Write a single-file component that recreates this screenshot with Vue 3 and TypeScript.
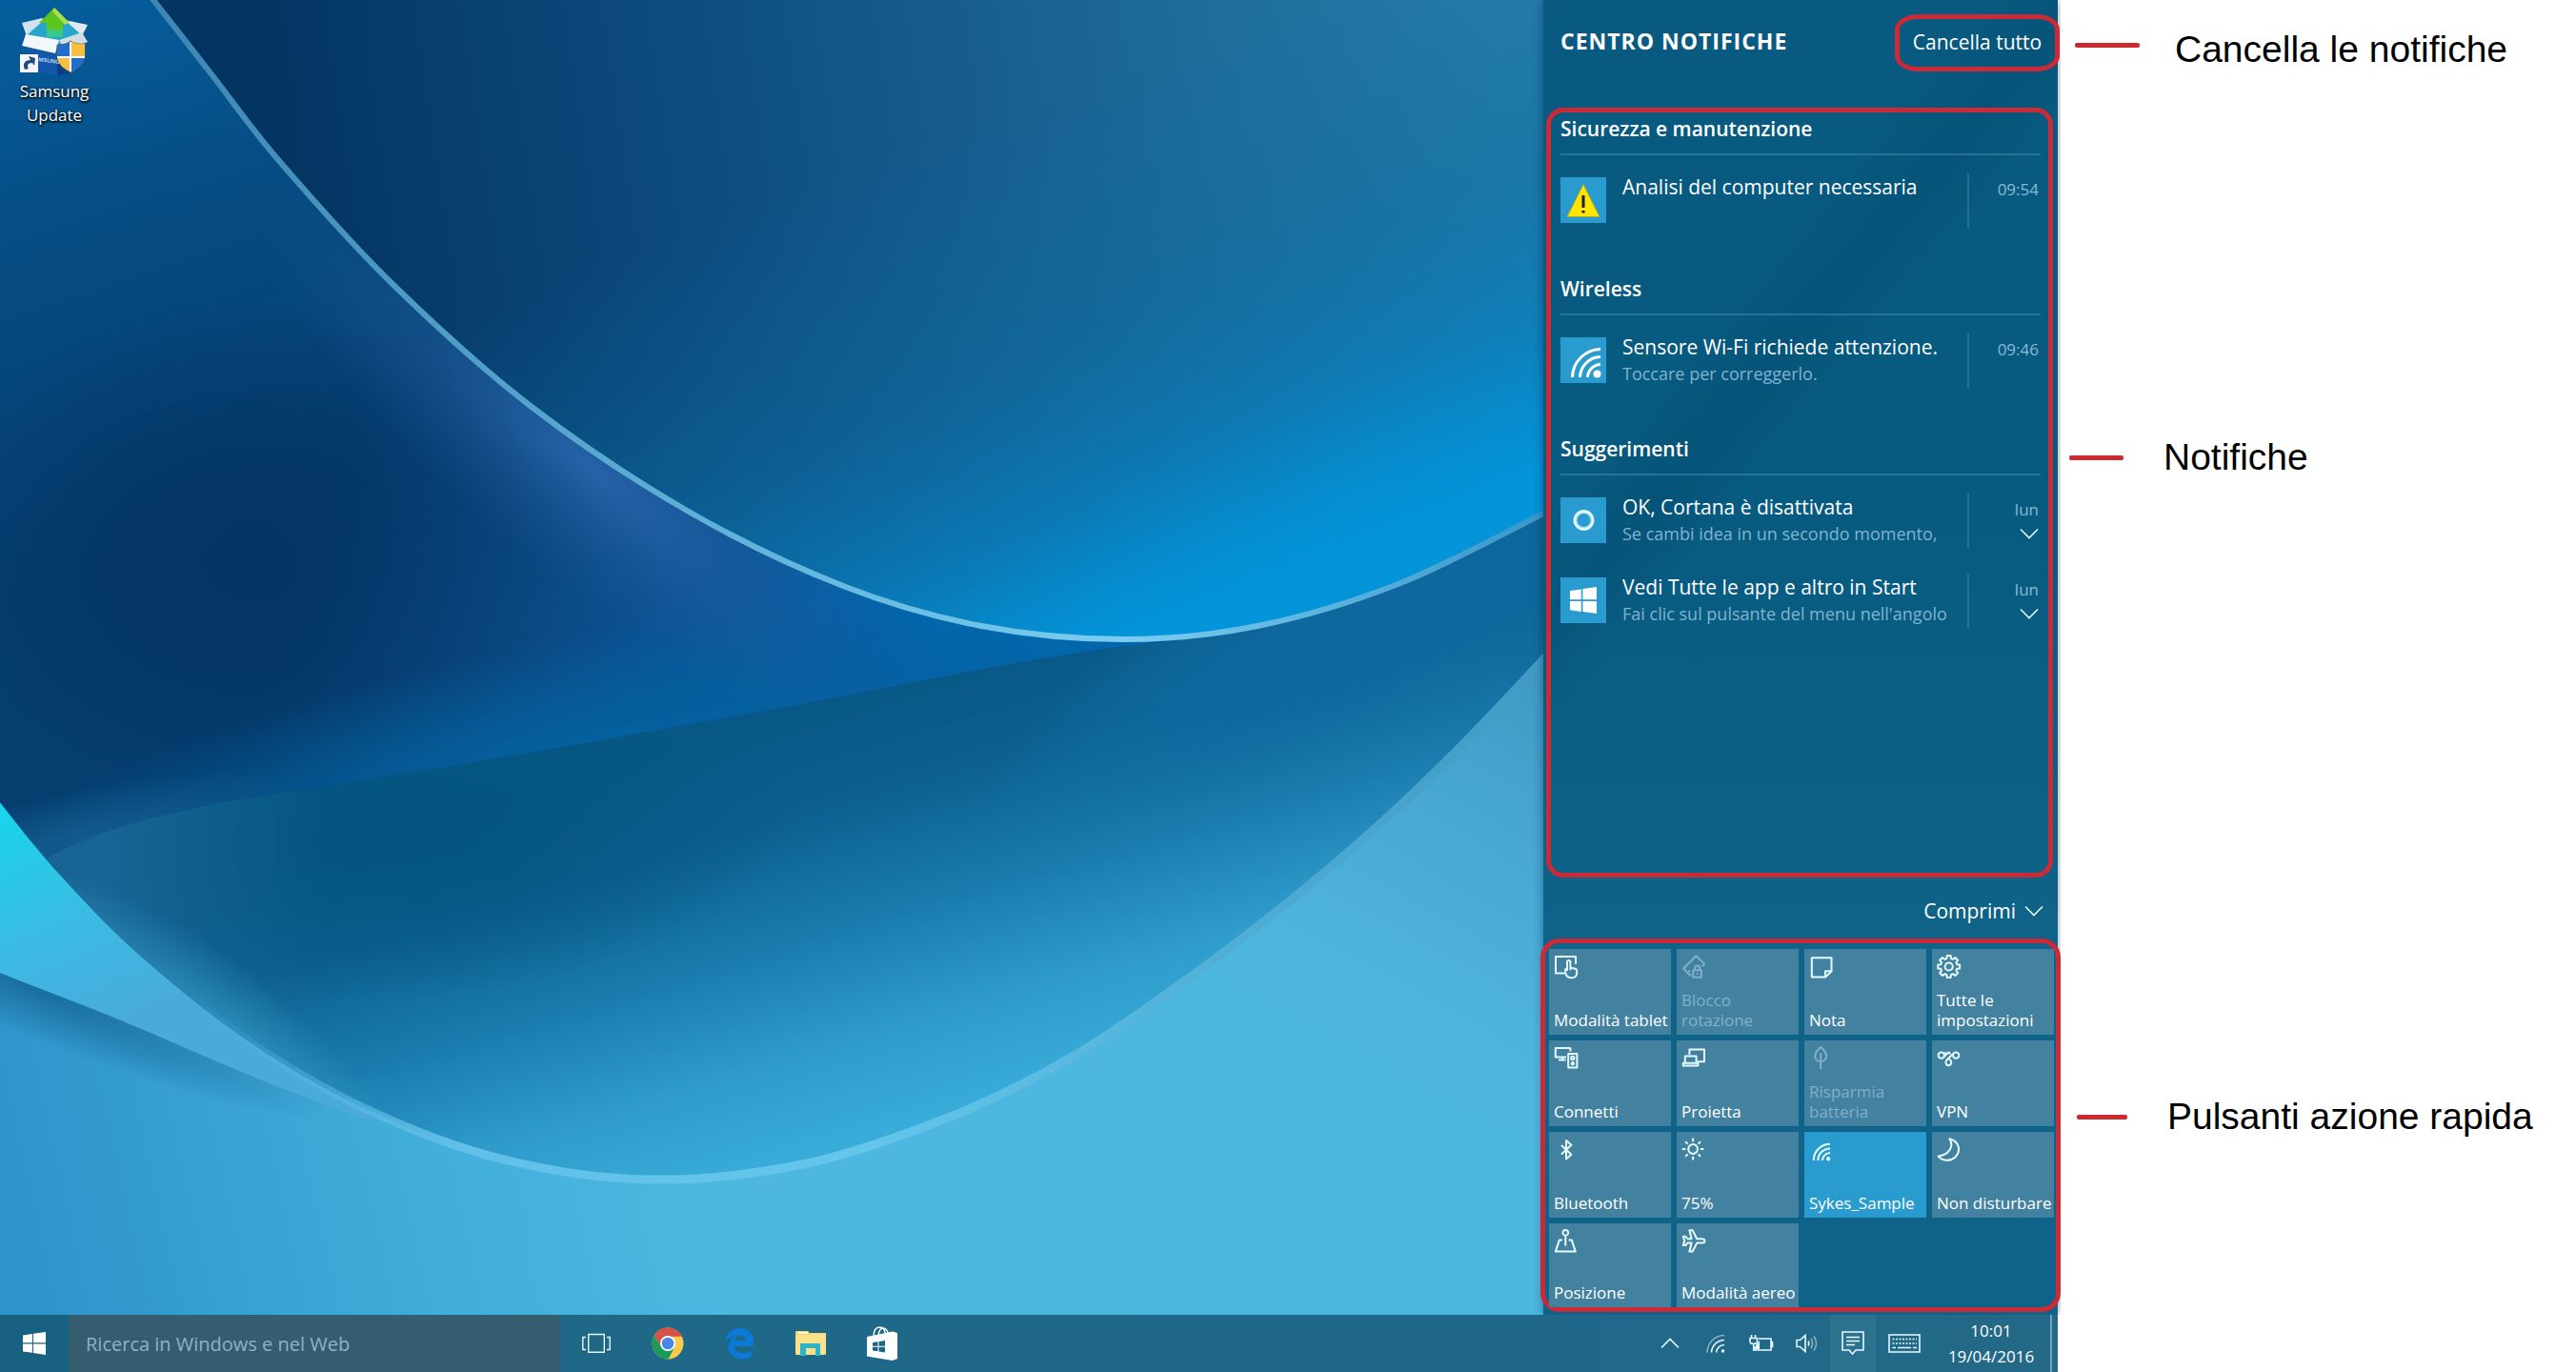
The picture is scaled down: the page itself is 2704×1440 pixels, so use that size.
<script setup lang="ts">
type NoticeIcon = 'warning' | 'wifi' | 'cortana' | 'windows'
type Point = [number, number]

interface Notice {
  icon: NoticeIcon
  title: string
  detail?: string
  time: string
  expandable?: boolean
}

interface NoticeGroup {
  name: string
  notices: Notice[]
}

interface QuickAction {
  label: string
  paths: string[]
  disabled?: boolean
  active?: boolean
}

const groups: NoticeGroup[] = [
  {
    name: 'Sicurezza e manutenzione',
    notices: [{ icon: 'warning', title: 'Analisi del computer necessaria', time: '09:54' }],
  },
  {
    name: 'Wireless',
    notices: [
      {
        icon: 'wifi',
        title: 'Sensore Wi-Fi richiede attenzione.',
        detail: 'Toccare per correggerlo.',
        time: '09:46',
      },
    ],
  },
  {
    name: 'Suggerimenti',
    notices: [
      {
        icon: 'cortana',
        title: 'OK, Cortana è disattivata',
        detail: 'Se cambi idea in un secondo momento,',
        time: 'lun',
        expandable: true,
      },
      {
        icon: 'windows',
        title: 'Vedi Tutte le app e altro in Start',
        detail: "Fai clic sul pulsante del menu nell'angolo",
        time: 'lun',
        expandable: true,
      },
    ],
  },
]

// Smooth curve through the given points (Catmull-Rom turned into Béziers),
// without the leading move command so that it can be joined to other pieces.
function curve(points: Point[]): string {
  let d = `${points[0][0]} ${points[0][1]}`
  for (let i = 0; i < points.length - 1; i++) {
    const before = points[i - 1] ?? points[i]
    const from = points[i]
    const to = points[i + 1]
    const after = points[i + 2] ?? to
    const x1 = from[0] + (to[0] - before[0]) / 6
    const y1 = from[1] + (to[1] - before[1]) / 6
    const x2 = to[0] - (after[0] - from[0]) / 6
    const y2 = to[1] - (after[1] - from[1]) / 6
    d += `C${x1.toFixed(1)} ${y1.toFixed(1)} ${x2.toFixed(1)} ${y2.toFixed(1)} ${to[0]} ${to[1]}`
  }
  return d
}

const upperEdge: Point[] = [
  [150, -14], [222, 78], [294, 170], [413, 299], [558, 427], [723, 537], [885, 615],
  [1030, 657], [1178, 671], [1320, 657], [1470, 612], [1626, 536],
]
const lowerEdge: Point[] = [
  [-14, 820], [0, 842], [62, 917], [145, 1001], [258, 1091], [382, 1163], [525, 1216],
  [682, 1238], [847, 1221], [1000, 1171], [1124, 1110], [1240, 1032], [1346, 952],
  [1446, 867], [1529, 788], [1626, 686],
]

const upperArea = `M${curve(upperEdge)}V-20Z`
const upperLine = `M${curve(upperEdge)}`
const lowerLine = `M${curve(lowerEdge.slice(3))}`
const middleArea = `M${curve(lowerEdge)}V500H1000L0 800Z`

// Outline of a cog with eight teeth, centred in the 26-unit icon box.
function cog(cx: number, cy: number, outer: number, inner: number): string {
  const points: string[] = []
  for (let tooth = 0; tooth < 8; tooth++) {
    const middle = (tooth * Math.PI) / 4
    const corners: Point[] = [
      [-0.27, inner],
      [-0.17, outer],
      [0.17, outer],
      [0.27, inner],
    ]
    for (const [turn, radius] of corners) {
      const x = cx + radius * Math.cos(middle + turn)
      const y = cy + radius * Math.sin(middle + turn)
      points.push(`${x.toFixed(2)} ${y.toFixed(2)}`)
    }
  }
  return `M${points.join('L')}Z`
}

const actions: QuickAction[] = [
  {
    label: 'Modalità tablet',
    paths: [
      'M11 19.5H2V2H23V10',
      'M14 17V7.6a1.7 1.7 0 0 1 3.4 0v6l5 1.2c1.1.3 1.8 1.1 1.8 2.2v2.5a4.8 4.8 0 0 1-4.8 4.8h-1.6a5.8 5.8 0 0 1-5.6-5.8v-3.2h1.8M17.4 13.6v2.6',
    ],
  },
  {
    label: 'Blocco rotazione',
    disabled: true,
    paths: [
      'M10 22.5L2 14.5L15.5 1.3L24 9.6L21.5 12.2',
      'M12.3 16.2h8.6v7.6h-8.6zM14 16v-1.8a2.6 2.6 0 0 1 5.2 0v1.8M7.5 16.5l1.5 1.5M16.6 19.2v1.6',
    ],
  },
  { label: 'Nota', paths: ['M2.8 3.2H23.5V17.5L17 23.6H2.8Z', 'M23.2 17.2H17V23.4'] },
  {
    label: 'Tutte le impostazioni',
    paths: [cog(12.7, 12.5, 11.6, 8.8), 'M8.6 12.5a4.1 4.1 0 1 0 8.2 0a4.1 4.1 0 1 0-8.2 0'],
  },
  {
    label: 'Connetti',
    paths: [
      'M13 11.6H1.8V2H17.4V5.5M9 11.6V14.4M5 14.6H12.5',
      'M15.2 8H24.4V22.6H15.2ZM18.2 12.4a1.6 1.6 0 1 0 3.2 0a1.6 1.6 0 1 0-3.2 0M18.6 18.2a1.2 1.2 0 1 0 2.4 0a1.2 1.2 0 1 0-2.4 0',
    ],
  },
  {
    label: 'Proietta',
    paths: ['M8.4 9V3.4H24V16.2H17', 'M3.8 17.4V10.4H15.6V17.4M1.8 17.8H17.4V20.6H1.8Z'],
  },
  {
    label: 'Risparmia batteria',
    disabled: true,
    paths: [
      'M12.2 1C8.6 4 6.2 7.4 6.2 10.6C6.2 13.8 8.8 16 12.2 16C15.6 16 18.2 13.8 18.2 10.6C18.2 7.4 15.8 4 12.2 1Z',
      'M12.2 7V24',
    ],
  },
  {
    label: 'VPN',
    paths: [
      'M1.6 9.6a3.2 3.2 0 1 0 6.4 0a3.2 3.2 0 1 0-6.4 0M17 9.6a3.2 3.2 0 1 0 6.4 0a3.2 3.2 0 1 0-6.4 0',
      'M7.4 11.4L12.4 6.4L14.4 8.2M17.6 7.6L10.2 14.8C8.6 16.6 9.4 20.2 12.4 20.2C15.2 20.2 16 17 14.6 15.2L13 13.4M8 8L9.6 6.6',
    ],
  },
  { label: 'Bluetooth', paths: ['M8 8L18.4 17.8L13 22.4V3L18.4 7.8L8 17.4'] },
  {
    label: '75%',
    paths: [
      'M7.2 12a4.9 4.9 0 1 0 9.8 0a4.9 4.9 0 1 0-9.8 0',
      'M12.1.6V4.2M12.1 19.8V23.4M.8 12H4.4M19.8 12H23.4M4.2 4.2L6.6 6.6M17.6 17.4L20 19.8M20 4.2L17.6 6.6M6.6 17.4L4.2 19.8',
    ],
  },
  {
    label: 'Sykes_Sample',
    active: true,
    paths: [
      'M4.8 24A17 17 0 0 1 22 6.8M9.4 24A12.5 12.5 0 0 1 22 11.4M14 24A8 8 0 0 1 22 16',
      'M19 22.2a1.2 1.2 0 1 0 2.4 0a1.2 1.2 0 1 0-2.4 0',
    ],
  },
  {
    label: 'Non disturbare',
    paths: ['M13.4 1.2C17.8 8 14.4 18 1.6 19.4C5.4 24.6 14 25.4 19.4 20.4C25.6 14.4 24 4 13.4 1.2Z'],
  },
  {
    label: 'Posizione',
    paths: [
      'M9.4 3.8a2.9 2.9 0 1 0 5.8 0a2.9 2.9 0 1 0-5.8 0M12.3 6.8V17.6',
      'M9 11.6H5.8L1.8 23.6H22.8L18.8 11.6H15.6',
    ],
  },
  {
    label: 'Modalità aereo',
    paths: [
      'M24.4 12.4C24.4 11 23 10.2 21.4 10.2H16.2L11.6 1.2H8.4L10.6 10.2H6.4L4.4 7.8H1.8L3.2 12.4L1.8 17H4.4L6.4 14.6H10.6L8.4 23.6H11.6L16.2 14.6H21.4C23 14.6 24.4 13.8 24.4 12.4Z',
    ],
  },
]

const callouts = [
  { key: 'for-clear', text: 'Cancella le notifiche' },
  { key: 'for-list', text: 'Notifiche' },
  { key: 'for-tiles', text: 'Pulsanti azione rapida' },
]
</script>

<template>
  <div class="sheet">
    <div class="screen">
      <div class="workspace">
        <svg class="wallpaper" viewBox="0 0 1620 1380" preserveAspectRatio="none" aria-hidden="true">
          <defs>
            <linearGradient id="upper" gradientUnits="userSpaceOnUse" x1="300" y1="120" x2="1560" y2="-60">
              <stop offset="0" stop-color="#033563" />
              <stop offset=".35" stop-color="#0e4d80" />
              <stop offset=".7" stop-color="#1c6896" />
              <stop offset="1" stop-color="#277da8" />
            </linearGradient>
            <linearGradient id="upperRise" gradientUnits="userSpaceOnUse" x1="930" y1="90" x2="1160" y2="680">
              <stop offset=".1" stop-color="#0a6ba6" stop-opacity="0" />
              <stop offset=".5" stop-color="#0b6fa6" stop-opacity=".45" />
              <stop offset=".75" stop-color="#087fbd" stop-opacity=".75" />
              <stop offset="1" stop-color="#0494da" />
            </linearGradient>
            <radialGradient id="upperGlow" gradientUnits="userSpaceOnUse" cx="0" cy="0" r="1" gradientTransform="translate(1400 650) rotate(-24) scale(600 230)">
              <stop offset="0" stop-color="#0294d9" stop-opacity=".75" />
              <stop offset=".5" stop-color="#0294d9" stop-opacity=".35" />
              <stop offset="1" stop-color="#0294d9" stop-opacity="0" />
            </radialGradient>
            <linearGradient id="left" gradientUnits="userSpaceOnUse" x1="0" y1="0" x2="180" y2="560">
              <stop offset="0" stop-color="#055f9e" />
              <stop offset=".4" stop-color="#064d85" />
              <stop offset="1" stop-color="#053f70" />
            </linearGradient>
            <radialGradient id="leftDark" gradientUnits="userSpaceOnUse" cx="0" cy="0" r="1" gradientTransform="translate(265 590) scale(360 280)">
              <stop offset="0" stop-color="#033364" />
              <stop offset=".4" stop-color="#033465" stop-opacity=".75" />
              <stop offset="1" stop-color="#033465" stop-opacity="0" />
            </radialGradient>
            <linearGradient id="leftGlow" gradientUnits="userSpaceOnUse" x1="330" y1="560" x2="960" y2="750">
              <stop offset="0" stop-color="#0b427c" stop-opacity="0" />
              <stop offset=".45" stop-color="#0d5090" stop-opacity=".8" />
              <stop offset=".8" stop-color="#0660a6" />
              <stop offset="1" stop-color="#0368b0" />
            </linearGradient>
            <radialGradient id="leftRidge" gradientUnits="userSpaceOnUse" cx="0" cy="0" r="1" gradientTransform="translate(620 490) rotate(39) scale(430 120)">
              <stop offset="0" stop-color="#2a66ac" stop-opacity=".9" />
              <stop offset=".5" stop-color="#235d9f" stop-opacity=".4" />
              <stop offset="1" stop-color="#1d5796" stop-opacity="0" />
            </radialGradient>
            <radialGradient id="leftFoot" gradientUnits="userSpaceOnUse" cx="0" cy="0" r="1" gradientTransform="translate(620 785) rotate(-11) scale(640 120)">
              <stop offset="0" stop-color="#04619f" />
              <stop offset=".4" stop-color="#04609d" stop-opacity=".7" />
              <stop offset="1" stop-color="#045d99" stop-opacity="0" />
            </radialGradient>
            <radialGradient id="leftCorner" gradientUnits="userSpaceOnUse" cx="0" cy="0" r="1" gradientTransform="translate(90 880) rotate(-12) scale(240 52)">
              <stop offset="0" stop-color="#145c8e" />
              <stop offset="1" stop-color="#145c8e" stop-opacity="0" />
            </radialGradient>
            <linearGradient id="middle" gradientUnits="userSpaceOnUse" x1="700" y1="790" x2="830" y2="1230">
              <stop offset="0" stop-color="#085885" />
              <stop offset=".22" stop-color="#0b6090" />
              <stop offset=".5" stop-color="#1a7cae" />
              <stop offset=".75" stop-color="#2e9bcb" />
              <stop offset="1" stop-color="#3aaedb" />
            </linearGradient>
            <radialGradient id="middleDark" gradientUnits="userSpaceOnUse" cx="0" cy="0" r="1" gradientTransform="translate(420 880) rotate(-4) scale(420 170)">
              <stop offset="0" stop-color="#04547f" />
              <stop offset="1" stop-color="#04547f" stop-opacity="0" />
            </radialGradient>
            <radialGradient id="middleRight" gradientUnits="userSpaceOnUse" cx="0" cy="0" r="1" gradientTransform="translate(1460 640) rotate(-26) scale(460 120)">
              <stop offset="0" stop-color="#0e689f" />
              <stop offset=".5" stop-color="#0f6aa2" stop-opacity=".7" />
              <stop offset="1" stop-color="#1272a9" stop-opacity="0" />
            </radialGradient>
            <radialGradient id="middleEdge" gradientUnits="userSpaceOnUse" cx="0" cy="0" r="1" gradientTransform="translate(200 1110) rotate(38) scale(300 110)">
              <stop offset="0" stop-color="#3da5d0" />
              <stop offset="1" stop-color="#3da5d0" stop-opacity="0" />
            </radialGradient>
            <linearGradient id="edgeFade" gradientUnits="userSpaceOnUse" x1="0" y1="0" x2="340" y2="0">
              <stop offset="0" stop-color="#175f90" />
              <stop offset=".3" stop-color="#1d6b9b" stop-opacity=".7" />
              <stop offset="1" stop-color="#1d6b9b" stop-opacity="0" />
            </linearGradient>
            <linearGradient id="lower" gradientUnits="userSpaceOnUse" x1="0" y1="1150" x2="700" y2="1000">
              <stop offset="0" stop-color="#2f94ca" />
              <stop offset=".6" stop-color="#42aedb" />
              <stop offset="1" stop-color="#4db7e0" />
            </linearGradient>
            <linearGradient id="lowerRight" gradientUnits="userSpaceOnUse" x1="1640" y1="720" x2="1400" y2="1160">
              <stop offset="0" stop-color="#3f99c2" />
              <stop offset=".6" stop-color="#4cadd8" stop-opacity=".7" />
              <stop offset="1" stop-color="#52b8e1" stop-opacity="0" />
            </linearGradient>
            <linearGradient id="wedge" gradientUnits="userSpaceOnUse" x1="0" y1="860" x2="90" y2="1090">
              <stop offset="0" stop-color="#1bd3ea" />
              <stop offset=".5" stop-color="#3abce4" />
              <stop offset="1" stop-color="#4aaadc" />
            </linearGradient>
            <radialGradient id="wedgeShade" gradientUnits="userSpaceOnUse" cx="0" cy="0" r="1" gradientTransform="translate(40 1040) rotate(22) scale(330 50)">
              <stop offset="0" stop-color="#17699b" stop-opacity=".9" />
              <stop offset="1" stop-color="#17699b" stop-opacity="0" />
            </radialGradient>
            <linearGradient id="ridge" gradientUnits="userSpaceOnUse" x1="160" y1="0" x2="1620" y2="0">
              <stop offset="0" stop-color="#3d86b2" />
              <stop offset=".45" stop-color="#62b6dc" />
              <stop offset=".7" stop-color="#7accf0" />
              <stop offset="1" stop-color="#3a97c9" />
            </linearGradient>
            <linearGradient id="ridgeLow" gradientUnits="userSpaceOnUse" x1="200" y1="0" x2="1620" y2="0">
              <stop offset="0" stop-color="#58b4e0" stop-opacity="0" />
              <stop offset=".2" stop-color="#62c0e8" />
              <stop offset=".5" stop-color="#64c6ea" />
              <stop offset="1" stop-color="#3f9ac4" />
            </linearGradient>
            <clipPath id="clipUpper"><path :d="upperArea" /></clipPath>
            <clipPath id="clipMiddle"><path :d="middleArea" /></clipPath>
            <clipPath id="clipLeft">
              <path d="M0 0H1240V671C1130 682 1010 706 909 726C810 746 710 762 620 779C500 800 380 820 258 838C190 850 110 866 50 900L30 879L0 842Z" />
            </clipPath>
          </defs>

          <rect width="1620" height="1380" fill="url(#lower)" />
          <rect width="1620" height="1380" fill="url(#lowerRight)" />
          <rect width="1620" height="1380" fill="url(#wedgeShade)" />
          <path d="M0 830V1021C55 1043 110 1063 165 1087C240 1120 310 1150 400 1180L258 1080Z" fill="url(#wedge)" />

          <g clip-path="url(#clipMiddle)">
            <rect width="1620" height="1380" fill="url(#middle)" />
            <rect width="1620" height="1380" fill="url(#middleDark)" />
            <rect width="1620" height="1380" fill="url(#middleRight)" />
            <rect width="400" height="1380" fill="url(#edgeFade)" />
            <rect width="1620" height="1380" fill="url(#middleEdge)" />
          </g>
          <path :d="lowerLine" fill="none" stroke="url(#ridgeLow)" stroke-width="9" />

          <g clip-path="url(#clipLeft)">
            <rect width="1620" height="920" fill="url(#left)" />
            <rect width="1620" height="920" fill="url(#leftDark)" />
            <rect width="1620" height="920" fill="url(#leftGlow)" />
            <rect width="1620" height="920" fill="url(#leftFoot)" />
            <rect width="1620" height="920" fill="url(#leftRidge)" />
            <rect width="1620" height="920" fill="url(#leftCorner)" />
          </g>
          <g clip-path="url(#clipUpper)">
            <rect width="1620" height="700" fill="url(#upper)" />
            <rect width="1620" height="700" fill="url(#upperRise)" />
            <rect width="1620" height="700" fill="url(#upperGlow)" />
          </g>
          <path :d="upperLine" fill="none" stroke="url(#ridge)" stroke-width="6" />
        </svg>

        <main class="desktop">
          <button class="shortcut" type="button">
            <svg width="74" height="76" viewBox="0 0 74 76" aria-hidden="true">
              <path d="M8 44L40 50V74L10 67Z" fill="#1457a8" />
              <path d="M40 50L62 42V68L40 74Z" fill="#0d3f86" />
              <path d="M3 18L24 13L38 20L24 27L8 32Z" fill="#cfe3ec" />
              <path d="M72 20L48 15L38 20L50 28L66 32Z" fill="#dfeaf0" />
              <path d="M8 31L24 17H50L66 31L40 42Z" fill="#26a6cf" />
              <path d="M7 30L42 36L38 50L3 42Z" fill="#f3f7fa" />
              <path d="M42 36L66 28L72 38L48 48Z" fill="#d4dde4" />
              <path d="M37 2L53 18H46V33H29V18H21Z" fill="#5cc41c" />
              <path d="M37 2L53 18L48 20L35 6Z" fill="#a8e04a" />
              <path d="M29 25H46V33H29Z" fill="#38c98a" />
              <text x="12" y="57" class="boxname" transform="rotate(8 12 57)">SAMSUNG</text>
              <path d="M40 41Q50 41 54 37Q60 41 69 40V52C69 60 63 66 55 70C46 66 40 60 40 52Z" fill="#1e6fd0" stroke="#55606c" stroke-width="1" />
              <path d="M55 37Q60 41 69 40V54H55ZM40 54H55V70C46 66 41 61 40 54Z" fill="#f9bf3f" />
              <path d="M54 38V69M40 54H69" stroke="#fff" stroke-width="2" />
              <rect x="1" y="51" width="19" height="19" fill="#f4f7fb" />
              <path d="M6 67C3 60 7 57 12 57L10 53L17 55L16 63L14 60C9 60 8 63 10 66Z" fill="#23497c" />
            </svg>
            <span>Samsung Update</span>
          </button>
        </main>

        <aside class="center">
          <header class="center-head">
            <h1>CENTRO NOTIFICHE</h1>
            <button class="clear marked" type="button">Cancella tutto</button>
          </header>

          <div class="notices marked">
            <section v-for="group in groups" :key="group.name" class="group">
              <h2>{{ group.name }}</h2>
              <ul>
                <li v-for="notice in group.notices" :key="notice.title" class="notice">
                  <span class="badge">
                    <svg v-if="notice.icon === 'warning'" width="48" height="48" viewBox="0 0 48 48">
                      <path d="M24 7.5L41 41.5H7Z" fill="#ffe500" stroke="#a9a83a" stroke-width="1" />
                      <path d="M24 19V32M24 35V37.5" stroke="#1d1d2b" stroke-width="3" />
                    </svg>
                    <svg v-else-if="notice.icon === 'wifi'" width="48" height="48" viewBox="0 0 48 48" fill="none" stroke="#fff" stroke-width="3">
                      <path d="M12.5 42A30 30 0 0 1 42 12.5M20.5 42A22 22 0 0 1 42 20.5M28.5 42A14 14 0 0 1 42 28.5" />
                      <circle cx="38.5" cy="38.5" r="4" fill="#fff" stroke="none" />
                    </svg>
                    <svg v-else-if="notice.icon === 'cortana'" width="48" height="48" viewBox="0 0 48 48">
                      <circle cx="24.5" cy="24" r="9" fill="none" stroke="#a9e2ee" stroke-width="4" />
                      <circle cx="24.5" cy="24" r="9.6" fill="none" stroke="#eefcff" stroke-width="2" />
                    </svg>
                    <svg v-else width="48" height="48" viewBox="0 0 48 48">
                      <path d="M10 14L21.8 12.4V23.3H10ZM23.4 12.1L38 10V23.3H23.4ZM10 24.9H21.8V35.9L10 34.2ZM23.4 24.9H38V38L23.4 36.1Z" fill="#fff" />
                    </svg>
                  </span>
                  <span class="words">
                    <strong>{{ notice.title }}</strong>
                    <span v-if="notice.detail" class="detail">{{ notice.detail }}</span>
                  </span>
                  <span class="when">
                    <time>{{ notice.time }}</time>
                    <button v-if="notice.expandable" class="expand" type="button" aria-label="Espandi">
                      <svg width="20" height="12" viewBox="0 0 20 12"><path d="M1 1.5L10 10.5L19 1.5" /></svg>
                    </button>
                  </span>
                </li>
              </ul>
            </section>
          </div>

          <button class="collapse" type="button">
            Comprimi
            <svg width="20" height="12" viewBox="0 0 20 12"><path d="M1 1.5L10 10.5L19 1.5" /></svg>
          </button>

          <div class="tiles marked">
            <button
              v-for="action in actions"
              :key="action.label"
              class="tile"
              :class="{ active: action.active }"
              :disabled="action.disabled"
              type="button"
            >
              <svg width="26" height="26" viewBox="0 0 26 26" aria-hidden="true">
                <path v-for="path in action.paths" :key="path" :d="path" />
              </svg>
              <span>{{ action.label }}</span>
            </button>
          </div>
        </aside>
      </div>

      <footer class="taskbar">
        <button class="start" type="button" aria-label="Start">
          <svg width="24" height="24" viewBox="0 0 24 24">
            <path d="M0 3.4L10 2V11.3H0ZM11 1.8L24 0V11.3H11ZM0 12.4H10V21.8L0 20.5ZM11 12.4H24V24L11 22Z" fill="#fff" />
          </svg>
        </button>
        <input class="search" type="search" placeholder="Ricerca in Windows e nel Web" aria-label="Ricerca in Windows e nel Web" />
        <nav class="apps">
          <button type="button" aria-label="Visualizzazione attività">
            <svg width="30" height="22" viewBox="0 0 30 22" fill="none" stroke="#e6f7fb" stroke-width="1.4">
              <path d="M6.7 1.5H23.3V20.3H6.7ZM4 4.5H.8V17.5H4M26 4.5H29.2V17.5H26" />
            </svg>
          </button>
          <button type="button" aria-label="Chrome">
            <svg width="34" height="34" viewBox="0 0 34 34">
              <circle cx="17" cy="17" r="16.5" fill="#fbcb4b" />
              <path d="M2.7 8.8A16.5 16.5 0 0 1 32 9.8H17L10 21Z" fill="#d3524a" />
              <path d="M2.7 8.8L10.5 21.5L17 24.5L24 21L17.5 33.5A16.5 16.5 0 0 1 2.7 8.8Z" fill="#1b9a59" />
              <circle cx="17" cy="17" r="8" fill="#fff" />
              <circle cx="17" cy="17" r="6.3" fill="#4a86e8" />
            </svg>
          </button>
          <button type="button" aria-label="Edge">
            <svg width="32" height="34" viewBox="0 0 32 34">
              <path d="M1 14.5C2.5 6 9 1 17 1C26 1 31 7.5 31 15.5V20H11C11.5 25 15.5 27 20 27C23.5 27 26.5 26 29 24.5V31C26 32.5 22.5 33 19 33C10 33 4.5 28 4.5 20.5C4.5 15.5 7.5 11.5 12 9.5C7 10 3.5 12 1 14.5ZM11.5 14H22.5C22.5 10.5 20.5 8.5 17.5 8.5C14 8.5 12 10.5 11.5 14Z" fill="#0a7ad6" />
            </svg>
          </button>
          <button type="button" aria-label="Esplora file">
            <svg width="32" height="28" viewBox="0 0 32 28">
              <path d="M0 2Q0 1 1 1H13L15 3H31Q32 3 32 4V25Q32 26 31 26H1Q0 26 0 25Z" fill="#f3d468" />
              <path d="M3 2H13V4H3Z" fill="#fff7d8" />
              <path d="M0 5H15L17 3.5H32V24L30 26H2L0 24Z" fill="#fbe28a" />
              <path d="M5 14H26V27H21V19H11V27H5Z" fill="#2fb2cc" />
            </svg>
          </button>
          <button type="button" aria-label="Store">
            <svg width="32" height="36" viewBox="0 0 32 36">
              <path d="M7 11C7 4 10 1 13.5 1C17 1 19 4 19.5 9M12 10C12.5 5 14.5 2 17 2C20 2 22 5 22 8" fill="none" stroke="#fff" stroke-width="1.5" />
              <path d="M0 11L27 5.5L32 7V34L27 36L0 31.5Z" fill="#fff" />
              <path d="M6 17L11.5 16.2V20.7H6ZM12.5 16L19 15V20.7H12.5ZM6 21.7H11.5V26.3L6 25.5ZM12.5 21.7H19V27.4L12.5 26.4Z" fill="#1f6686" />
            </svg>
          </button>
        </nav>
        <div class="tray">
          <button type="button" aria-label="Mostra icone nascoste">
            <svg width="20" height="12" viewBox="0 0 20 12"><path d="M1 10.5L10 1.5L19 10.5" /></svg>
          </button>
          <button type="button" aria-label="Wi-Fi">
            <svg width="20" height="20" viewBox="0 0 20 20">
              <path d="M1 19.5A18 18 0 0 1 19 1.5" opacity=".5" />
              <path d="M5.5 19.5A13.5 13.5 0 0 1 19 6.5M10.5 19.5A8.5 8.5 0 0 1 19 11.5" />
              <rect x="16" y="16.5" width="3" height="3" class="solid" />
            </svg>
          </button>
          <button type="button" aria-label="Batteria">
            <svg width="26" height="20" viewBox="0 0 26 20">
              <path d="M10 5H23V17H6V13M23 8.5H24.5V13.5H23M2.5 1V4.5M6.5 1V4.5M1 4.5H8.5V8Q8.5 10.5 4.7 10.5Q1 10.5 1 8ZM4.7 10.5V17H6" />
              <path d="M7 12L11 7V16H7Z" class="solid" />
            </svg>
          </button>
          <button type="button" aria-label="Volume">
            <svg width="24" height="20" viewBox="0 0 24 20">
              <path d="M1 6.5H4.5L10 1.5V18.5L4.5 13.5H1ZM13 7.5Q14.5 10 13 12.5" />
              <path d="M16 5Q19 10 16 15M19 2.5Q24 10 19 17.5" opacity=".5" />
            </svg>
          </button>
          <button class="open" type="button" aria-label="Centro notifiche">
            <svg width="24" height="26" viewBox="0 0 24 26">
              <path d="M1 1H23V20H15L11.5 24L8 20H1ZM5 6.5H19M5 10.5H19M5 14.5H14" />
            </svg>
          </button>
          <button class="keys" type="button" aria-label="Tastiera virtuale">
            <svg width="34" height="20" viewBox="0 0 34 20">
              <path d="M1 1H33V19H1Z" />
              <path d="M4.5 5.5H30M4.5 10H30" stroke-dasharray="2 1.5" />
              <path d="M4.5 14.5H8M10 14.5H24M26 14.5H30" />
            </svg>
          </button>
          <button class="clock" type="button">
            <time>10:01</time>
            <time>19/04/2016</time>
          </button>
          <button class="peek" type="button" aria-label="Mostra desktop"></button>
        </div>
      </footer>
    </div>

    <aside class="notes">
      <p v-for="callout in callouts" :key="callout.key" class="callout" :class="callout.key">
        <span class="leader"></span>
        <span>{{ callout.text }}</span>
      </p>
    </aside>
  </div>
</template>

<style>
body {
  margin: 0;
  background: #fff;
}
</style>

<style scoped>
.sheet {
  display: flex;
  min-height: 100vh;
  font-family: 'Open Sans', 'Noto Sans', sans-serif;
  color: #fff;
}

.sheet *,
.sheet *::before {
  box-sizing: border-box;
}

button {
  padding: 0;
  border: 0;
  background: none;
  color: inherit;
  font: inherit;
}

h1,
h2,
p,
ul {
  margin: 0;
  padding: 0;
  list-style: none;
}

svg {
  display: block;
}

.screen {
  flex: 1;
  min-width: 0;
  display: flex;
  flex-direction: column;
}

.workspace {
  flex: 1;
  position: relative;
  display: flex;
}

.wallpaper {
  position: absolute;
  inset: 0 540px 0 0;
  width: calc(100% - 540px);
  height: 100%;
}

.desktop {
  flex: 1;
  position: relative;
  padding: 6px 12px;
}

.shortcut {
  display: flex;
  flex-direction: column;
  align-items: center;
  gap: 1px;
  width: 90px;
  font-size: 17px;
  line-height: 25px;
  text-shadow: 1px 1px 3px #000, 0 1px 2px #000;
}

.boxname {
  font: 700 6px 'Liberation Sans', sans-serif;
  fill: #b6d4f2;
  text-shadow: none;
}

/* Red outlines that single out the parts named beside the screen */
.marked {
  border: 5px solid #cc2a36;
}

.center {
  position: relative;
  width: 540px;
  display: flex;
  flex-direction: column;
  padding-bottom: 3px;
  background:
    linear-gradient(130deg, transparent 27%, rgba(0, 50, 90, 0.16) 33%, transparent 38%),
    linear-gradient(#085a80, #075a80 40%, #0f6388 70%, #106388);
  box-shadow: 0 0 10px rgba(0, 30, 60, 0.45);
  clip-path: inset(0 -3px 0 -10px);
}

.center-head {
  display: flex;
  align-items: center;
  justify-content: space-between;
  padding: 15px 0 38px 18px;
  margin-right: -2px;
}

h1 {
  padding-bottom: 5px;
  font-size: 23px;
  line-height: 30px;
  font-weight: 700;
  letter-spacing: 1px;
}

.clear {
  width: 173px;
  height: 60px;
  padding-bottom: 3px;
  border-radius: 24px / 16px;
  font-size: 21px;
}

.notices {
  flex: 1;
  margin: 0 5px 0 3px;
  padding: 2px 8px 40px 10px;
  border-radius: 18px;
}

.group + .group {
  margin-top: 49px;
}

h2 {
  padding-bottom: 11px;
  border-bottom: 2px solid rgba(120, 190, 220, 0.28);
  font-size: 21px;
  line-height: 30px;
  font-weight: 600;
}

ul {
  display: flex;
  flex-direction: column;
  gap: 27px;
  padding-top: 19px;
}

.notice {
  display: flex;
  height: 57px;
}

.badge {
  width: 48px;
  height: 48px;
  margin-top: 4px;
  background: #2a9bcf;
}

.words {
  flex: 1;
  min-width: 0;
  margin: 0 18px 0 17px;
  overflow: hidden;
  white-space: nowrap;
  line-height: 28px;
}

.words strong {
  display: block;
  font-size: 21px;
  font-weight: 400;
}

.detail {
  font-size: 18px;
  color: #80b4cf;
}

.when {
  width: 77px;
  display: flex;
  flex-direction: column;
  align-items: flex-end;
  gap: 5px;
  padding: 3px 2px 0 0;
  border-left: 2px solid rgba(120, 190, 220, 0.25);
  font-size: 17px;
  line-height: 28px;
  color: #8abbd4;
}

.expand svg,
.collapse svg,
.tray svg,
.tile svg {
  fill: none;
  stroke: #e6fbff;
  stroke-width: 1.6;
}

.collapse {
  align-self: flex-end;
  display: flex;
  align-items: center;
  gap: 9px;
  height: 64px;
  padding: 5px 15px 0 0;
  font-size: 21px;
}

.tiles {
  display: grid;
  grid-template-columns: repeat(4, 1fr);
  grid-template-rows: repeat(3, 90px) 88px;
  gap: 6px;
  margin: 0 -3px;
  padding: 6px 2px 0 4px;
  border-radius: 20px;
}

.tile {
  display: flex;
  flex-direction: column;
  justify-content: space-between;
  align-items: flex-start;
  padding: 6px 0 5px 5px;
  background: #4282a0;
  font-size: 17px;
  line-height: 21px;
  text-align: left;
}

.tile svg {
  stroke-width: 2;
  stroke-linejoin: round;
}

.tile span {
  max-width: 123px;
}

.tile.active {
  background: #2a9bcf;
}

.tile:disabled {
  color: #7fb0c8;
}

.tile:disabled svg {
  stroke: #7fb0c8;
}

.taskbar {
  display: flex;
  height: 60px;
  background: linear-gradient(90deg, #17607f, #1f6887 30%, #20688a 75%, #246987);
}

.taskbar button {
  display: flex;
  align-items: center;
  justify-content: center;
}

.start {
  width: 72px;
}

.search {
  width: 516px;
  padding: 0 18px;
  border: 0;
  border-radius: 0;
  background: #345d70;
  color: #fff;
  font: 20px 'Open Sans', 'Noto Sans', sans-serif;
  appearance: none;
}

.search::placeholder {
  color: #8fb2c3;
  opacity: 1;
}

.apps,
.tray {
  display: flex;
}

.apps button {
  width: 75px;
}

.tray {
  margin-left: auto;
}

.tray button {
  width: 48px;
}

.tray .solid {
  fill: #e6fbff;
  stroke: none;
}

.tray .open {
  background: #2c718d;
}

.tray .keys {
  width: 59px;
}

.tray .clock {
  width: 124px;
  flex-direction: column;
  font-size: 17px;
  line-height: 27px;
}

.tray .peek {
  width: 8px;
  border-left: 2px solid #6ba5bd;
}

.notes {
  width: 544px;
  padding-top: 30px;
  font: 39px/44px 'Liberation Sans', Arial, sans-serif;
  color: #000;
}

.callout {
  display: flex;
  align-items: center;
}

.leader {
  height: 5px;
  border-radius: 2px;
  background: #cc2a30;
}

.for-clear {
  gap: 37px;
  padding-left: 18px;
}

.for-clear .leader {
  width: 68px;
  margin-bottom: 10px;
}

.for-list {
  gap: 42px;
  margin-top: 384px;
  padding-left: 12px;
}

.for-list .leader {
  width: 57px;
}

.for-tiles {
  gap: 42px;
  margin-top: 648px;
  padding-left: 20px;
}

.for-tiles .leader {
  width: 53px;
}
</style>
